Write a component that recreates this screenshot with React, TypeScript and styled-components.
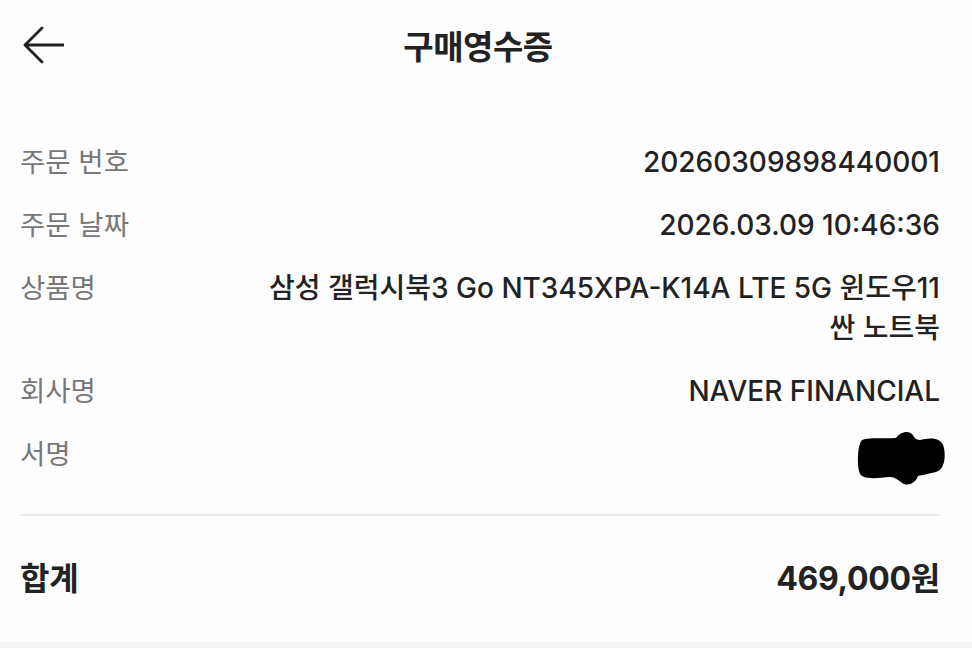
import styled, { createGlobalStyle } from "styled-components";

const GlobalStyle = createGlobalStyle`
  body {
    margin: 0;
    background: #fdfdfd;
    font-family: "Inter", "Noto Sans CJK KR", sans-serif;
    color: #222;
  }
`;

const Page = styled.div`
  width: 100%;
  min-height: 100vh;
  display: flex;
  flex-direction: column;
`;

const Header = styled.header`
  display: grid;
  grid-template-columns: 1fr auto 1fr;
  align-items: center;
  height: 90px;
  padding: 0 36px 0 20px;
`;

const BackButton = styled.button`
  justify-self: start;
  display: flex;
  align-items: center;
  border: none;
  background: none;
  padding: 0;
  cursor: pointer;
`;

const Title = styled.h1`
  margin: 0;
  font-size: 33px;
  font-weight: 700;
  letter-spacing: -0.5px;
  color: #222;
`;

const Body = styled.main`
  padding: 52px 32px 0 20px;
  display: flex;
  flex-direction: column;
`;

const InfoList = styled.div`
  display: flex;
  flex-direction: column;
  gap: 23px;
`;

const Row = styled.div`
  display: flex;
  justify-content: space-between;
  align-items: flex-start;
  gap: 40px;
`;

const Label = styled.div`
  flex-shrink: 0;
  font-size: 27.5px;
  line-height: 40px;
  color: #777;
`;

const Value = styled.div`
  font-size: 28px;
  line-height: 40px;
  font-weight: 500;
  color: #222;
  text-align: right;
  max-width: 700px;
`;

const Signature = styled.svg`
  margin-top: -4px;
  margin-right: -6px;
`;

const Divider = styled.hr`
  margin: 28px 0 0;
  border: none;
  height: 2px;
  background: #ececf0;
`;

const TotalRow = styled.div`
  display: flex;
  justify-content: space-between;
  align-items: center;
  margin-top: 40px;
  height: 40px;
  font-size: 32px;
  font-weight: 700;
  letter-spacing: -0.3px;
  color: #222;
`;

const Footer = styled.div`
  margin-top: auto;
  height: 6px;
  background: #f2f5f4;
`;

const rows = [
  { label: "주문 번호", value: "20260309898440001" },
  { label: "주문 날짜", value: "2026.03.09 10:46:36" },
  {
    label: "상품명",
    value: "삼성 갤럭시북3 Go NT345XPA-K14A LTE 5G 윈도우11 싼 노트북",
  },
  { label: "회사명", value: "NAVER FINANCIAL" },
];

const App = () => {
  return (
    <Page>
      <GlobalStyle />
      <Header>
        <BackButton aria-label="뒤로">
          <svg width="44" height="40" viewBox="0 0 44 40" fill="none">
            <path
              d="M22 3 L5 20 L22 37 M5 20 H44"
              stroke="#222"
              strokeWidth="2.8"
              strokeLinecap="round"
              strokeLinejoin="round"
            />
          </svg>
        </BackButton>
        <Title>구매영수증</Title>
        <div />
      </Header>
      <Body>
        <InfoList>
          {rows.map((r) => (
            <Row key={r.label}>
              <Label>{r.label}</Label>
              <Value>{r.value}</Value>
            </Row>
          ))}
          <Row>
            <Label>서명</Label>
            <Signature width="90" height="56" viewBox="0 0 90 56">
              <path
                d="M6 10 C14 7 30 9 40 8 C44 2 52 0 56 4 C58 7 60 10 64 10 C72 8 86 6 88 18 C90 28 88 40 80 42 C72 44 66 45 62 46 C60 52 54 56 48 54 C44 52 40 47 34 47 C22 48 8 50 4 44 C1 36 1 16 6 10 Z"
                fill="#000"
              />
            </Signature>
          </Row>
        </InfoList>
        <Divider />
        <TotalRow>
          <span>합계</span>
          <span>469,000원</span>
        </TotalRow>
      </Body>
      <Footer />
    </Page>
  );
};

export default App;
